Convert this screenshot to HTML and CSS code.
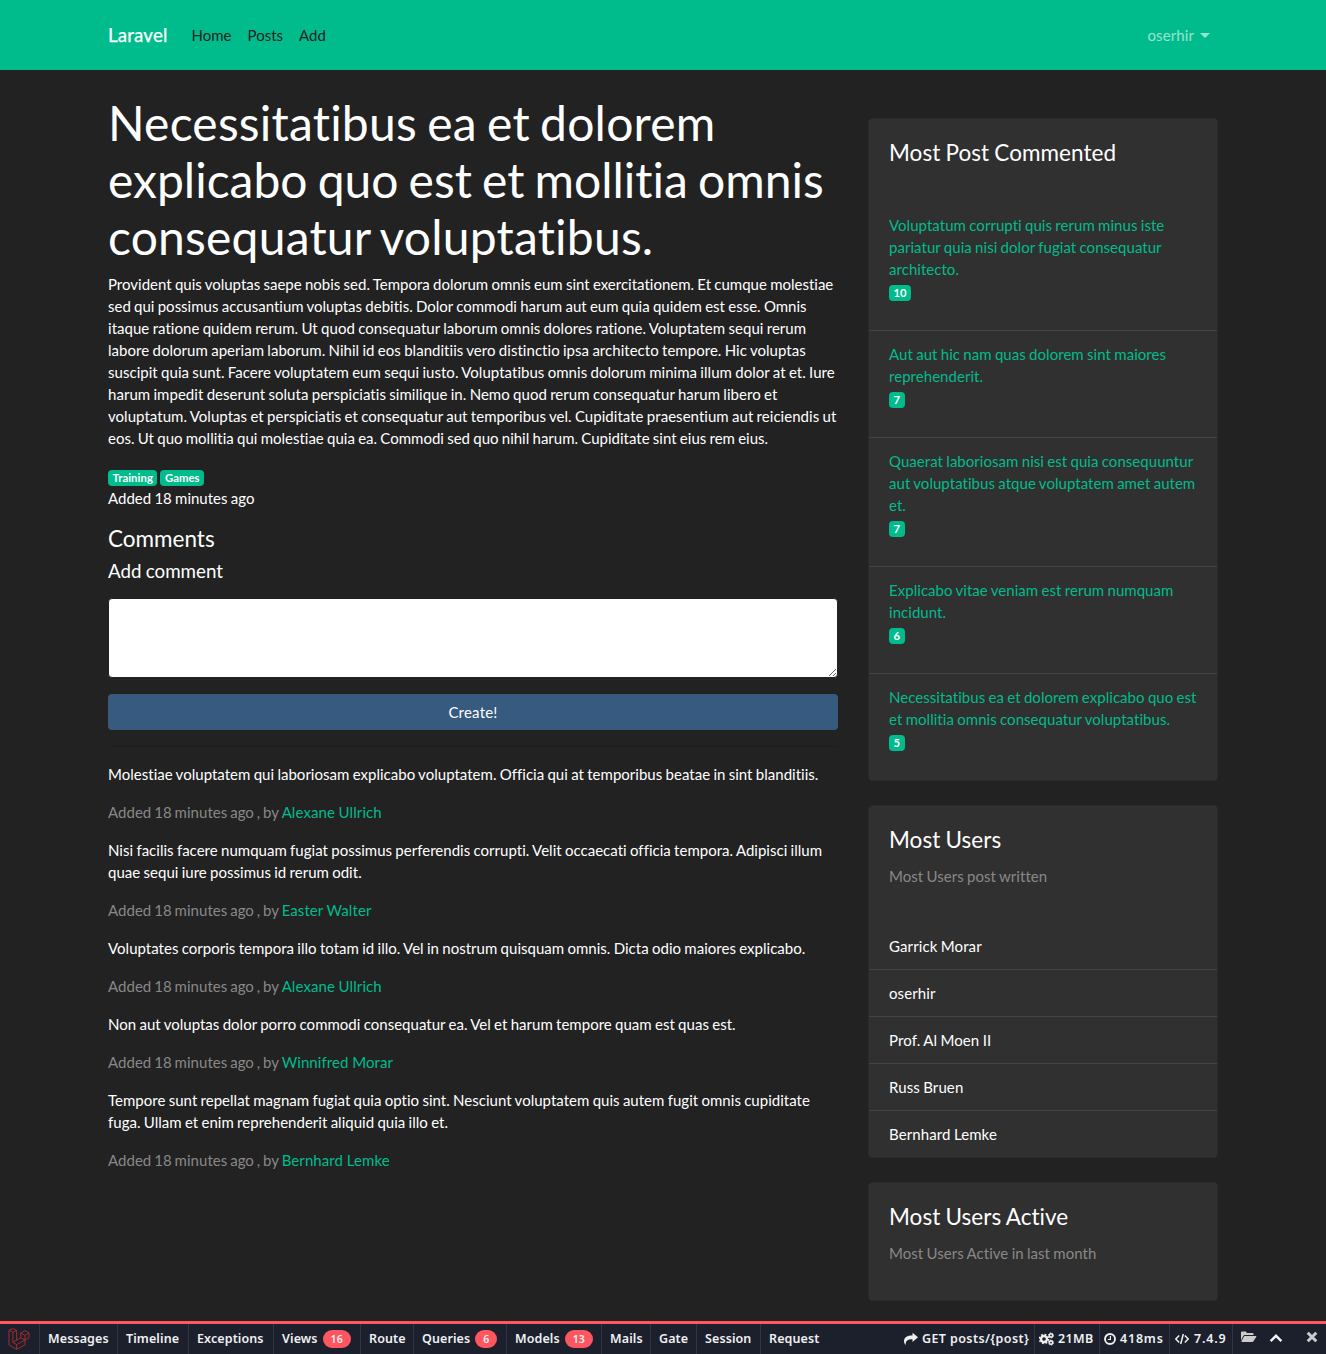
FILE: index.html
```html
<!DOCTYPE html>
<html lang="en">
<head>
<meta charset="utf-8">
<title>Laravel</title>
<link rel="stylesheet" href="styles.css">
</head>
<body>
<nav class="navbar">
  <div class="container navbar-inner">
    <a class="brand">Laravel</a>
    <a class="nav-link">Home</a><a class="nav-link">Posts</a><a class="nav-link">Add</a>
    <a class="nav-link user">oserhir<span class="caret"></span></a>
  </div>
</nav>
<main class="container row">
  <section class="post">
    <h1><span class="loose">Necessitatibus ea et dolorem</span><br>explicabo quo est et mollitia omnis<br><span class="loose">consequatur voluptatibus.</span></h1>
    <p class="body-text">Provident quis voluptas saepe nobis sed. Tempora dolorum omnis eum sint exercitationem. Et cumque molestiae<br>sed qui possimus accusantium voluptas debitis. Dolor commodi harum aut eum quia quidem est esse. Omnis<br><span class="wide-line">itaque ratione quidem rerum. Ut quod consequatur laborum omnis dolores ratione. Voluptatem sequi rerum<br>labore dolorum aperiam laborum. Nihil id eos blanditiis vero distinctio ipsa architecto tempore. Hic voluptas<br>suscipit quia sunt. Facere voluptatem eum sequi iusto. Voluptatibus omnis dolorum minima illum dolor at et. Iure<br>harum impedit deserunt soluta perspiciatis similique in. Nemo quod rerum consequatur harum libero et<br>voluptatum. Voluptas et perspiciatis et consequatur aut temporibus vel. Cupiditate praesentium aut reiciendis ut</span><br>eos. Ut quo mollitia qui molestiae quia ea. Commodi sed quo nihil harum. Cupiditate sint eius rem eius.</p>
    <div class="tags"><span class="badge">Training</span><span class="badge">Games</span></div>
    <p class="added">Added 18 minutes ago</p>
    <h4>Comments</h4>
    <h5>Add comment</h5>
    <form>
      <textarea rows="3"></textarea>
      <button type="button">Create!</button>
    </form>
    <hr>
    <p class="comment">Molestiae voluptatem qui laboriosam explicabo voluptatem. Officia qui at temporibus beatae in sint blanditiis.</p>
    <p class="muted meta">Added 18 minutes ago , by <a>Alexane Ullrich</a></p>
    <p class="comment">Nisi facilis facere numquam fugiat possimus perferendis corrupti. Velit occaecati officia tempora. Adipisci illum<br>quae sequi iure possimus id rerum odit.</p>
    <p class="muted meta">Added 18 minutes ago , by <a>Easter Walter</a></p>
    <p class="comment">Voluptates corporis tempora illo totam id illo. Vel in nostrum quisquam omnis. Dicta odio maiores explicabo.</p>
    <p class="muted meta">Added 18 minutes ago , by <a>Alexane Ullrich</a></p>
    <p class="comment">Non aut voluptas dolor porro commodi consequatur ea. Vel et harum tempore quam est quas est.</p>
    <p class="muted meta">Added 18 minutes ago , by <a>Winnifred Morar</a></p>
    <p class="comment">Tempore sunt repellat magnam fugiat quia optio sint. Nesciunt voluptatem quis autem fugit omnis cupiditate<br>fuga. Ullam et enim reprehenderit aliquid quia illo et.</p>
    <p class="muted meta">Added 18 minutes ago , by <a>Bernhard Lemke</a></p>
  </section>
  <aside class="side">
    <div class="card">
      <div class="card-head short"><h4>Most Post Commented</h4></div>
      <ul class="list posts">
        <li><a>Voluptatum corrupti quis rerum minus iste<br>pariatur quia nisi dolor fugiat consequatur<br>architecto.</a><div class="count"><span class="badge">10</span></div></li>
        <li><a>Aut aut hic nam quas dolorem sint maiores<br>reprehenderit.</a><div class="count"><span class="badge">7</span></div></li>
        <li><a>Quaerat laboriosam nisi est quia consequuntur<br>aut voluptatibus atque voluptatem amet autem<br>et.</a><div class="count"><span class="badge">7</span></div></li>
        <li><a>Explicabo vitae veniam est rerum numquam<br>incidunt.</a><div class="count"><span class="badge">6</span></div></li>
        <li><a>Necessitatibus ea et dolorem explicabo quo est<br>et mollitia omnis consequatur voluptatibus.</a><div class="count"><span class="badge">5</span></div></li>
      </ul>
    </div>
    <div class="card">
      <div class="card-head"><h4>Most Users</h4><p class="muted">Most Users post written</p></div>
      <ul class="list">
        <li>Garrick Morar</li><li>oserhir</li><li>Prof. Al Moen II</li><li>Russ Bruen</li><li>Bernhard Lemke</li>
      </ul>
    </div>
    <div class="card">
      <div class="card-head"><h4>Most Users Active</h4><p class="muted">Most Users Active in last month</p></div>
    </div>
  </aside>
</main>
<footer class="debugbar">
  <div class="logo"><svg width="22" height="22" viewBox="0 0 22 22" fill="none" stroke="#a32a2b" stroke-width="1" stroke-linejoin="round"><path d="M1 2.200 4.700.600 8.600 2.300V12.200L12.700 9.800V5L17 2.700 21 5V9.800L17 12V16.800L8.600 21.300 1 17ZM1 2.200 4.900 4.300 8.600 2.300M4.900 4.300V14.300L8.600 12.200M4.900 14.300 8.600 16.700 17 12V7.300L21 5M12.700 5 17 7.300M12.700 9.800 17 12M8.600 21.300V16.700"/></svg></div>
  <div class="tab w78"><span>Messages</span></div>
  <div class="tab w71"><span>Timeline</span></div>
  <div class="tab w85"><span>Exceptions</span></div>
  <div class="tab w87"><span>Views</span><b>16</b></div>
  <div class="tab w53"><span>Route</span></div>
  <div class="tab w93"><span>Queries</span><b>6</b></div>
  <div class="tab w95"><span>Models</span><b>13</b></div>
  <div class="tab w49"><span>Mails</span></div>
  <div class="tab w46"><span>Gate</span></div>
  <div class="tab w64"><span>Session</span></div>
  <div class="tab last"><span>Request</span></div>
  <div class="info route"><svg width="14" height="14" viewBox="0 0 14 14" fill="#eee"><path d="M14 5.300 8.500.8V3.400C3 3.400 0 5.300 0 9c0 1.600.7 3 1.700 3.900C1.500 9 3.500 7.300 8.500 7.300V10Z"/></svg><span>GET posts/{post}</span></div>
  <div class="info w65"><svg width="15" height="14" viewBox="0 0 15 14" fill="none" stroke="#eee"><circle cx="5" cy="7" r="3" stroke-width="2.400"/><circle cx="5" cy="7" r="4.600" stroke-width="1.500" stroke-dasharray="1.800 1.810"/><circle cx="12" cy="3.400" r="1.700" stroke-width="1.600"/><circle cx="12" cy="3.400" r="2.600" stroke-width=".8" stroke-dasharray="1.200 1.520"/><circle cx="12" cy="10.600" r="1.700" stroke-width="1.600"/><circle cx="12" cy="10.600" r="2.600" stroke-width=".8" stroke-dasharray="1.200 1.520"/></svg><span>21MB</span></div>
  <div class="info w70 wide"><svg width="12" height="14" viewBox="0 0 12 14" fill="none" stroke="#eee"><circle cx="6" cy="7" r="5" stroke-width="1.900"/><path d="M6.400 4V7.500H3.800" stroke-width="1.200"/></svg><span>418ms</span></div>
  <div class="info w63 wide version"><svg width="14" height="14" viewBox="0 0 14 14" fill="none" stroke="#eee" stroke-width="1.500"><path d="M4.200 3.500.8 7l3.400 3.500M9.800 3.500 13.200 7l-3.400 3.500M8.300 2 5.700 12"/></svg><span>7.4.9</span></div>
  <div class="controls">
    <svg class="folder" width="16" height="12" viewBox="0 0 16 12" fill="#ccc"><path d="M0 9.500V1.500Q0 .5 1 .5H4.500Q5.500.5 5.500 1.500V2H11.500Q12.500 2 12.500 3V4H4Q2.800 4 2 5.200ZM3.800 5H15Q15.800 5 15.300 5.800L12.500 10.200Q12 11 11 11H1Q0 11 .5 10.200L2.700 5.700Q3.100 5 3.800 5Z"/></svg>
    <svg class="up" width="14" height="10" viewBox="0 0 14 10" fill="none" stroke="#f2f2f2" stroke-width="2.400"><path d="M1.600 8.200 7 2.800l5.400 5.400"/></svg>
    <svg class="close" width="12" height="12" viewBox="0 0 12 12" fill="none" stroke="#ccc" stroke-width="3"><path d="m1.700 1.700 8.600 8.600M10.300 1.700 1.700 10.300"/></svg>
  </div>
</footer>
</body>
</html>
```
FILE: styles.css
```css
* { box-sizing: border-box; }
html, body { height: 1354px; overflow: hidden; }
body { margin: 0; display: flex; flex-direction: column; background: #222; color: #fff; font: 400 15px/22px Lato, sans-serif; font-variant-ligatures: none; word-spacing: -.57px; }
h1, h4, h5, p, ul { margin: 0; padding: 0; font-weight: 400; }
h1 { font-size: 48px; line-height: 57px; margin-bottom: 8px; white-space: nowrap; word-spacing: -2.200px; }
h4 { font-size: 22.5px; line-height: 27px; }
h5 { font-size: 18.75px; line-height: 22px; }
p { margin-bottom: 16px; white-space: nowrap; }
a { color: #00bc8c; }
.loose { letter-spacing: .2px; }
.wide-line { letter-spacing: .035px; }
.comment { letter-spacing: .02px; }
.container { width: 1140px; margin: 0 auto; padding: 0 15px; }
.navbar { height: 70px; flex: none; background: #00bc8c; }
.navbar-inner { height: 70px; display: flex; align-items: center; }
.navbar .brand { color: #fff; font-size: 18.75px; letter-spacing: .15px; margin-right: 16px; -webkit-text-stroke: .25px #fff; }
.nav-link { color: #222; padding: 0 8px; }
.nav-link.user { margin-left: auto; color: rgba(255,255,255,.6); display: flex; align-items: center; letter-spacing: .1px; }
.caret { margin-left: 6px; border: 5px solid transparent; border-top-color: currentColor; border-bottom: 0; }
.row { display: flex; gap: 30px; flex: 1; min-height: 0; }
.post { width: 730px; padding-top: 24px; }
.tags { display: flex; align-items: flex-end; gap: 3px; height: 21px; }
.badge { display: block; background: #00bc8c; border-radius: 4px; font-size: 11.25px; font-weight: 700; line-height: 10px; letter-spacing: .08px; padding: 3px 4.500px 3px; height: 16px; }
.added { margin-top: 1px; }
.post h4 { margin: 0 0 8px; }
.post h5 { margin-bottom: 16px; }
textarea { display: block; width: 730px; height: 80px; margin: 0 0 16px; background: #fff; border: 1px solid #222; border-radius: 4px; }
button { display: block; width: 730px; height: 36px; border: 0; border-radius: 4px; background: #375a7f; color: #fff; font: 15px/22px Lato, sans-serif; letter-spacing: .2px; }
hr { margin: 16px 0; border: 0; border-top: 1px solid rgba(0,0,0,.1); }
.muted { color: #888; }
.meta { word-spacing: -1px; letter-spacing: .04px; }
.meta a { word-spacing: -.3px; letter-spacing: .09px; }
.side { width: 350px; padding-top: 48px; letter-spacing: .04px; }
.card { background: #303030; border: 1px solid #2a2a2a; border-radius: 4px; margin-bottom: 24px; }
.card-head { padding: 20px; }
.card-head h4 { margin-bottom: 12px; }
.card-head.short { height: 83px; }
.list { list-style: none; letter-spacing: .1px; }
.list.posts { letter-spacing: .04px; }
.list li { padding: 12px 20px; border-bottom: 1px solid #444; white-space: nowrap; }
.list li:last-child { border-bottom: 0; }
.count { height: 22px; padding-top: 5px; margin-bottom: 16px; display: flex; align-items: flex-start; }
.debugbar { height: 33px; flex: none; display: flex; border-top: 3px solid #ff5660; background: #1b202c; color: #f0f0f0; font: 600 12.500px/30px "Noto Sans", sans-serif; letter-spacing: .1px; word-spacing: 0; }
.logo { width: 40px; padding: 4px 8px; border-right: 1px solid #2f3644; }
.logo svg { display: block; }
.tab { display: flex; align-items: center; padding-left: 8px; border-right: 1px solid #2f3644; white-space: nowrap; }
.tab b { margin-left: 5px; padding: 0 8px; border-radius: 9px; background: #ff5660; font-size: 10.500px; font-weight: 600; line-height: 18px; }
.w78 { width: 78px; } .w71 { width: 71px; } .w85 { width: 85px; } .w87 { width: 87px; } .w53 { width: 53px; } .w93 { width: 93px; } .w95 { width: 95px; }
.w49 { width: 49px; } .w46 { width: 46px; } .w64 { width: 64px; } .w65 { width: 65px; } .w70 { width: 70px; } .w63 { width: 63px; }
.tab.last { border-right: 0; flex: 1; }
.info { display: flex; align-items: center; gap: 4px; padding-left: 4px; border-right: 1px solid #2f3644; white-space: nowrap; letter-spacing: .4px; }
.info.wide { letter-spacing: .8px; }
.info.version { padding-left: 5px; gap: 5px; }
.info svg { flex: none; }
.route { width: 135px; }
.controls { width: 93px; display: flex; align-items: flex-start; padding-left: 8px; }
.folder { margin-top: 7px; }
.up { margin: 9px 0 0 12px; }
.close { margin: 7px 0 0 23px; }
```
